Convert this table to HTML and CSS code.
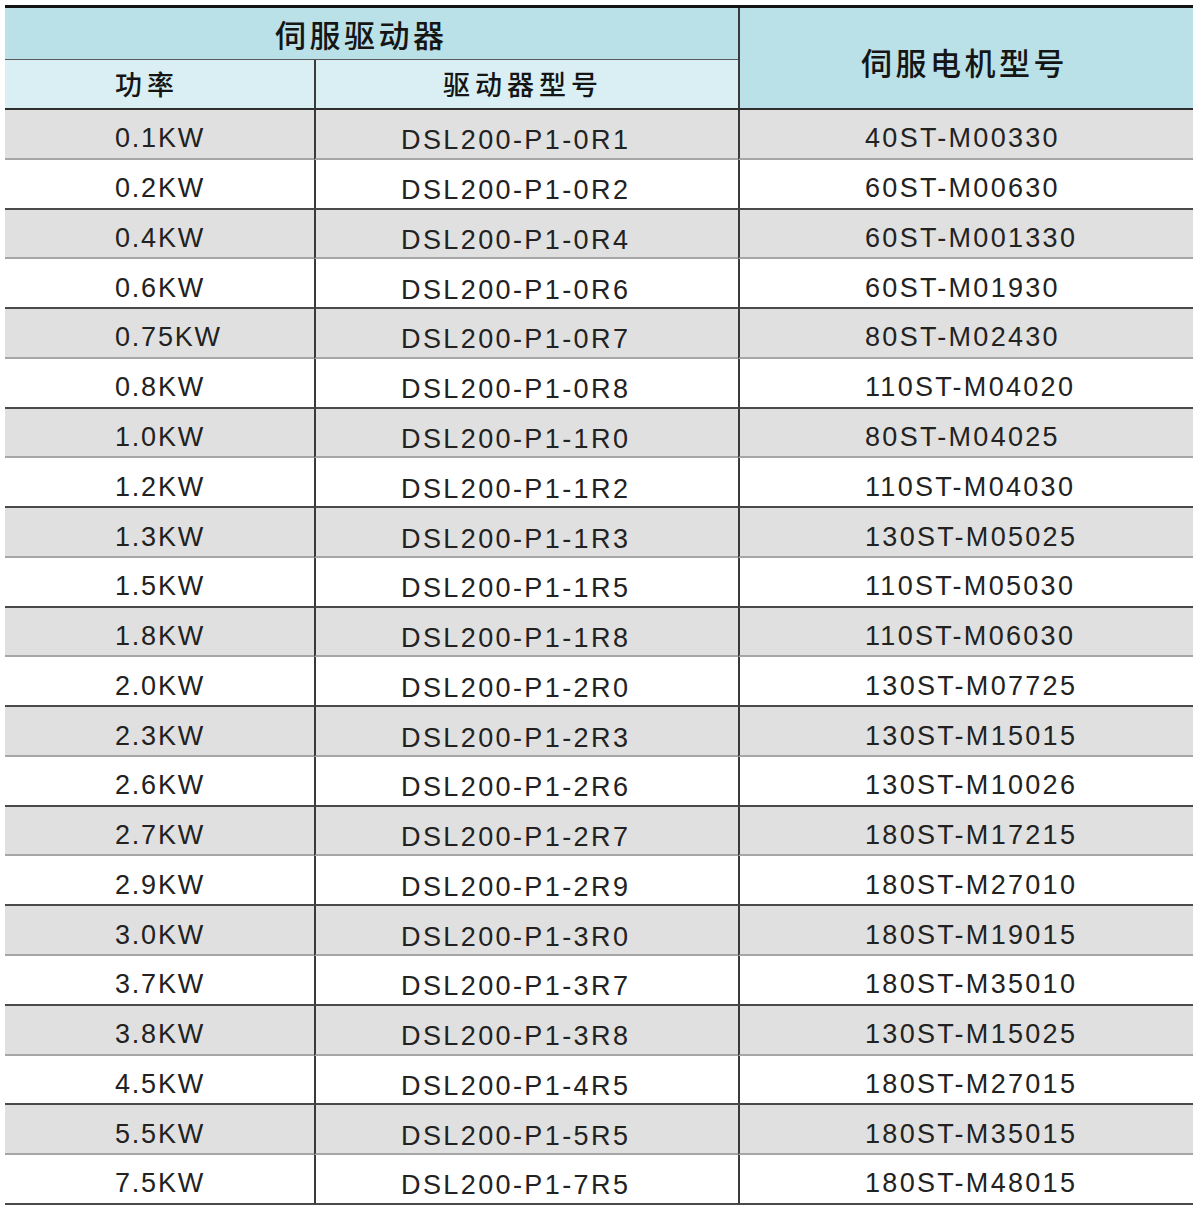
FILE: index.html
```html
<!DOCTYPE html>
<html lang="zh-CN">
<head>
<meta charset="utf-8">
<title>伺服驱动器 / 伺服电机型号</title>
<link rel="stylesheet" href="styles.css">
</head>
<body>
<table class="spec">
  <colgroup>
    <col class="col-power">
    <col class="col-model">
    <col class="col-motor">
  </colgroup>
  <thead>
    <tr>
      <th class="h1 h-drive" colspan="2">伺服驱动器</th>
      <th class="h1 h-motor" rowspan="2">伺服电机型号</th>
    </tr>
    <tr>
      <th class="h2 h-power">功率</th>
      <th class="h2 h-model">驱动器型号</th>
    </tr>
  </thead>
  <tbody>
    <tr class="g"><td class="c1">0.1KW</td><td class="c2">DSL200-P1-0R1</td><td class="c3">40ST-M00330</td></tr>
    <tr><td class="c1">0.2KW</td><td class="c2">DSL200-P1-0R2</td><td class="c3">60ST-M00630</td></tr>
    <tr class="g"><td class="c1">0.4KW</td><td class="c2">DSL200-P1-0R4</td><td class="c3">60ST-M001330</td></tr>
    <tr><td class="c1">0.6KW</td><td class="c2">DSL200-P1-0R6</td><td class="c3">60ST-M01930</td></tr>
    <tr class="g"><td class="c1">0.75KW</td><td class="c2">DSL200-P1-0R7</td><td class="c3">80ST-M02430</td></tr>
    <tr><td class="c1">0.8KW</td><td class="c2">DSL200-P1-0R8</td><td class="c3">110ST-M04020</td></tr>
    <tr class="g"><td class="c1">1.0KW</td><td class="c2">DSL200-P1-1R0</td><td class="c3">80ST-M04025</td></tr>
    <tr><td class="c1">1.2KW</td><td class="c2">DSL200-P1-1R2</td><td class="c3">110ST-M04030</td></tr>
    <tr class="g"><td class="c1">1.3KW</td><td class="c2">DSL200-P1-1R3</td><td class="c3">130ST-M05025</td></tr>
    <tr><td class="c1">1.5KW</td><td class="c2">DSL200-P1-1R5</td><td class="c3">110ST-M05030</td></tr>
    <tr class="g"><td class="c1">1.8KW</td><td class="c2">DSL200-P1-1R8</td><td class="c3">110ST-M06030</td></tr>
    <tr><td class="c1">2.0KW</td><td class="c2">DSL200-P1-2R0</td><td class="c3">130ST-M07725</td></tr>
    <tr class="g"><td class="c1">2.3KW</td><td class="c2">DSL200-P1-2R3</td><td class="c3">130ST-M15015</td></tr>
    <tr><td class="c1">2.6KW</td><td class="c2">DSL200-P1-2R6</td><td class="c3">130ST-M10026</td></tr>
    <tr class="g"><td class="c1">2.7KW</td><td class="c2">DSL200-P1-2R7</td><td class="c3">180ST-M17215</td></tr>
    <tr><td class="c1">2.9KW</td><td class="c2">DSL200-P1-2R9</td><td class="c3">180ST-M27010</td></tr>
    <tr class="g"><td class="c1">3.0KW</td><td class="c2">DSL200-P1-3R0</td><td class="c3">180ST-M19015</td></tr>
    <tr><td class="c1">3.7KW</td><td class="c2">DSL200-P1-3R7</td><td class="c3">180ST-M35010</td></tr>
    <tr class="g"><td class="c1">3.8KW</td><td class="c2">DSL200-P1-3R8</td><td class="c3">130ST-M15025</td></tr>
    <tr><td class="c1">4.5KW</td><td class="c2">DSL200-P1-4R5</td><td class="c3">180ST-M27015</td></tr>
    <tr class="g"><td class="c1">5.5KW</td><td class="c2">DSL200-P1-5R5</td><td class="c3">180ST-M35015</td></tr>
    <tr><td class="c1">7.5KW</td><td class="c2">DSL200-P1-7R5</td><td class="c3">180ST-M48015</td></tr>
  </tbody>
</table>
</body>
</html>
```

FILE: styles.css
```css
html, body {
  margin: 0;
  padding: 0;
  background: #ffffff;
}

.spec {
  margin: 5px 0 0 5px;
  width: 1188px;
  border-collapse: separate;
  border-spacing: 0;
  border-top: 3px solid #141414;
  table-layout: fixed;
}

.col-power { width: 309px; }
.col-model { width: 424px; }
.col-motor { width: 455px; }

.spec th,
.spec td {
  box-sizing: border-box;
  padding: 0;
  text-align: left;
  vertical-align: middle;
  white-space: nowrap;
  overflow: hidden;
}

/* header */
.spec th {
  font-family: "Noto Sans CJK SC", "Noto Sans", sans-serif;
  font-weight: 500;
  color: #151515;
}

.h1 {
  background: #bae1e7;
  font-size: 31px;
  letter-spacing: 3.5px;
  height: 52px;
  line-height: 34px;
}

.h-drive {
  border-bottom: 1px solid #5a5a5a;
  padding-left: 270px !important;
}

.h-motor {
  border-left: 2px solid #3a3a3a;
  border-bottom: 2px solid #2e2e2e;
  padding-left: 121px !important;
  padding-top: 8px !important;
}

.h2 {
  background: #d9eff3;
  font-size: 27px;
  letter-spacing: 5px;
  height: 50px;
  line-height: 32px;
  border-bottom: 2px solid #2e2e2e;
}

.h-power {
  padding-left: 110px !important;
}

.h-model {
  border-left: 2px solid #3a3a3a;
  padding-left: 127px !important;
}

/* body rows */
.spec td {
  font-family: "Liberation Sans", Arial, sans-serif;
  font-size: 27px;
  letter-spacing: 1.8px;
  color: #222222;
  height: 49.77px;
  line-height: 30px;
  padding-top: 9px;
  border-bottom: 2px solid #4a4a4a;
}

.spec tr.g td {
  background: #e0e0e0;
  border-bottom-color: #a6a6a6;
}

.c1 {
  padding-left: 110px !important;
}

.c2 {
  border-left: 2px solid #3a3a3a;
  padding-left: 85px !important;
  padding-top: 13px !important;
  letter-spacing: 2.4px !important;
}

.c3 {
  border-left: 2px solid #3a3a3a;
  padding-left: 125px !important;
  letter-spacing: 2.3px !important;
}
```
